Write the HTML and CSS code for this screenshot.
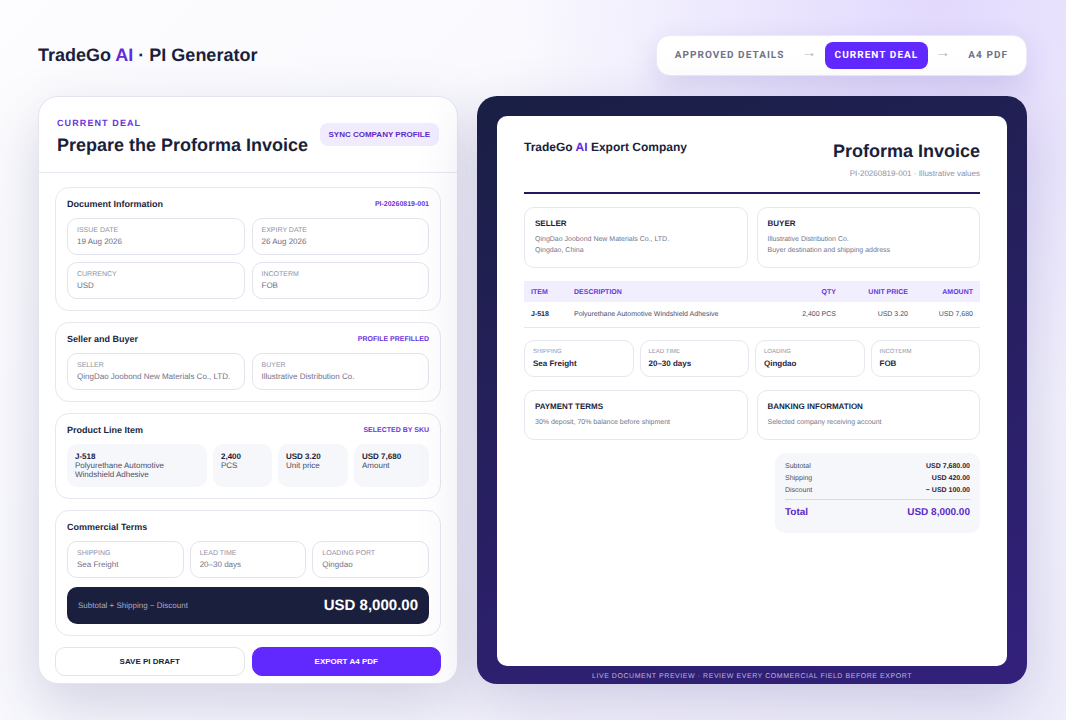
FILE: index.html
```html
<!DOCTYPE html>
<html lang="en">
<head>
<meta charset="UTF-8">
<title>TradeGo AI PI Generator</title>
<link rel="stylesheet" href="styles.css">
</head>
<body>
<header class="topbar">
  <h1 class="brand">TradeGo <span class="accent">AI</span> · PI Generator</h1>
  <div class="steps">
    <span class="step">APPROVED DETAILS</span>
    <span class="arrow">→</span>
    <span class="step step-active">CURRENT DEAL</span>
    <span class="arrow">→</span>
    <span class="step">A4 PDF</span>
  </div>
</header>

<main class="workspace">
  <section class="editor">
    <div class="editor-head">
      <div class="editor-heading">
        <div class="eyebrow">CURRENT DEAL</div>
        <h2 class="editor-title">Prepare the Proforma Invoice</h2>
      </div>
      <button class="sync-btn">SYNC COMPANY PROFILE</button>
    </div>
    <div class="editor-body">
      <div class="group">
        <div class="group-head"><h3>Document Information</h3><span class="tag">PI-20260819-001</span></div>
        <div class="fields fields-2">
          <div class="field"><label>ISSUE DATE</label><div>19 Aug 2026</div></div>
          <div class="field"><label>EXPIRY DATE</label><div>26 Aug 2026</div></div>
          <div class="field"><label>CURRENCY</label><div>USD</div></div>
          <div class="field"><label>INCOTERM</label><div>FOB</div></div>
        </div>
      </div>
      <div class="group">
        <div class="group-head"><h3>Seller and Buyer</h3><span class="tag">PROFILE PREFILLED</span></div>
        <div class="fields fields-2">
          <div class="field"><label>SELLER</label><div>QingDao Joobond New Materials Co., LTD.</div></div>
          <div class="field"><label>BUYER</label><div>Illustrative Distribution Co.</div></div>
        </div>
      </div>
      <div class="group">
        <div class="group-head"><h3>Product Line Item</h3><span class="tag">SELECTED BY SKU</span></div>
        <div class="line-item">
          <div class="cell cell-wide"><b>J-518</b>Polyurethane Automotive Windshield Adhesive</div>
          <div class="cell cell-qty"><b>2,400</b>PCS</div>
          <div class="cell cell-price"><b>USD 3.20</b>Unit price</div>
          <div class="cell cell-amount"><b>USD 7,680</b>Amount</div>
        </div>
      </div>
      <div class="group">
        <div class="group-head"><h3>Commercial Terms</h3></div>
        <div class="fields fields-3">
          <div class="field"><label>SHIPPING</label><div>Sea Freight</div></div>
          <div class="field"><label>LEAD TIME</label><div>20–30 days</div></div>
          <div class="field"><label>LOADING PORT</label><div>Qingdao</div></div>
        </div>
        <div class="total-bar">
          <span>Subtotal + Shipping − Discount</span>
          <strong>USD 8,000.00</strong>
        </div>
      </div>
      <div class="actions">
        <button class="btn">SAVE PI DRAFT</button>
        <button class="btn btn-primary">EXPORT A4 PDF</button>
      </div>
    </div>
  </section>

  <section class="preview">
    <div class="sheet">
      <div class="sheet-head">
        <div class="sheet-company">TradeGo <span class="accent">AI</span> Export Company</div>
        <div class="sheet-heading">
          <h2>Proforma Invoice</h2>
          <p>PI-20260819-001 · Illustrative values</p>
        </div>
      </div>
      <div class="party-row">
        <div class="box"><h4>SELLER</h4><p>QingDao Joobond New Materials Co., LTD.<br>Qingdao, China</p></div>
        <div class="box"><h4>BUYER</h4><p>Illustrative Distribution Co.<br>Buyer destination and shipping address</p></div>
      </div>
      <table class="items">
        <thead>
          <tr><th>ITEM</th><th>DESCRIPTION</th><th class="num">QTY</th><th class="num">UNIT PRICE</th><th class="num">AMOUNT</th></tr>
        </thead>
        <tbody>
          <tr><td class="sku">J-518</td><td>Polyurethane Automotive Windshield Adhesive</td><td class="num">2,400 PCS</td><td class="num">USD 3.20</td><td class="num">USD 7,680</td></tr>
        </tbody>
      </table>
      <div class="meta-row">
        <div class="meta"><label>SHIPPING</label><b>Sea Freight</b></div>
        <div class="meta"><label>LEAD TIME</label><b>20–30 days</b></div>
        <div class="meta"><label>LOADING</label><b>Qingdao</b></div>
        <div class="meta"><label>INCOTERM</label><b>FOB</b></div>
      </div>
      <div class="terms-row">
        <div class="box"><h4>PAYMENT TERMS</h4><p>30% deposit, 70% balance before shipment</p></div>
        <div class="box"><h4>BANKING INFORMATION</h4><p>Selected company receiving account</p></div>
      </div>
      <div class="summary">
        <div class="sum-line"><span>Subtotal</span><b>USD 7,680.00</b></div>
        <div class="sum-line"><span>Shipping</span><b>USD 420.00</b></div>
        <div class="sum-line"><span>Discount</span><b>− USD 100.00</b></div>
        <div class="sum-total"><span>Total</span><span>USD 8,000.00</span></div>
      </div>
    </div>
    <div class="preview-note">LIVE DOCUMENT PREVIEW · REVIEW EVERY COMMERCIAL FIELD BEFORE EXPORT</div>
  </section>
</main>
</body>
</html>
```

FILE: styles.css
```css
* {
  box-sizing: border-box;
}
html, body {
  height: 720px;
  overflow: hidden;
}
body {
  margin: 0;
  padding: 35px 39px 0 38px;
  font-family: "Liberation Sans", Arial, sans-serif;
  text-rendering: geometricPrecision;
  color: #1a1f3d;
  background:
    radial-gradient(circle at 88% 0%, #e2d9fd 0, rgba(226, 217, 253, 0) 36%),
    linear-gradient(135deg, #fdfdff 0%, #f7f7fd 55%, #efeefb 100%);
}
h1, h2, h3, h4, p {
  margin: 0;
}
.accent {
  color: #5f2ce0;
}
.topbar {
  display: flex;
  justify-content: space-between;
  align-items: center;
  height: 41px;
  margin-bottom: 20px;
}
.brand {
  font-size: 18px;
  font-weight: bold;
}
.steps {
  display: flex;
  align-items: center;
  gap: 7px;
  height: 41px;
  padding: 0 8px;
  background: #fff;
  border: 1px solid #eceaf6;
  border-radius: 14px;
  box-shadow: 0 10px 30px rgba(70, 50, 160, 0.14);
  font-family: Roboto, "Liberation Sans", sans-serif;
  font-size: 10px;
  font-weight: bold;
  letter-spacing: 1.05px;
  color: #6f7288;
}
.step {
  padding: 0 10px;
  line-height: 27px;
}
.step-active {
  background: #6229ff;
  color: #fff;
  border-radius: 8px;
}
.arrow {
  width: 16px;
  margin-bottom: 6px;
  font-family: "Liberation Sans", sans-serif;
  font-size: 15px;
  line-height: 27px;
  font-weight: normal;
  letter-spacing: 0;
  color: #b3b5c4;
}
.workspace {
  display: grid;
  grid-template-columns: 420px 550px;
  column-gap: 19px;
  height: 588px;
}
.editor {
  background: #fff;
  border: 1px solid #e3e4ee;
  border-radius: 20px;
  overflow: hidden;
  box-shadow: 0 20px 60px rgba(50, 50, 120, 0.2);
}
.editor-head {
  display: flex;
  justify-content: space-between;
  align-items: center;
  height: 76px;
  padding: 0 18px;
  border-bottom: 1px solid #e8e9f0;
}
.editor-heading {
  margin-top: 5px;
}
.eyebrow {
  font-size: 9px;
  font-weight: bold;
  letter-spacing: 1.1px;
  color: #6a34dd;
  margin-bottom: 7px;
}
.editor-title {
  font-size: 18px;
  line-height: 21px;
  font-weight: bold;
}
.sync-btn {
  border: none;
  height: 23px;
  padding: 0 9px;
  border-radius: 8px;
  background: #f0ebfd;
  color: #5a2bc8;
  font-family: inherit;
  font-size: 8px;
  font-weight: bold;
  white-space: nowrap;
}
.editor-body {
  display: flex;
  flex-direction: column;
  gap: 11px;
  padding: 14px 16px 0;
}
.group {
  border: 1px solid #e6e7ef;
  border-radius: 14px;
  padding: 11px;
}
.group-head {
  display: flex;
  justify-content: space-between;
  align-items: center;
  height: 10px;
  margin-bottom: 9px;
}
.group-head h3 {
  font-size: 9px;
  font-weight: bold;
}
.tag {
  font-size: 7px;
  font-weight: bold;
  color: #6a34dd;
}
.fields {
  display: grid;
  gap: 7px;
}
.fields-2 {
  grid-template-columns: 1fr 1fr;
}
.fields-3 {
  grid-template-columns: 1fr 1fr 1fr;
  gap: 6px;
}
.field {
  height: 37px;
  padding: 7px 9px;
  border: 1px solid #e2e3ec;
  border-radius: 10px;
  font-size: 8px;
  line-height: 11px;
  color: #6f7288;
}
.field label {
  display: block;
  font-size: 7px;
  line-height: 9px;
  margin-bottom: 1px;
  color: #8f91a6;
}
.line-item {
  display: grid;
  grid-template-columns: 140px 59px 70px 75px;
  gap: 6px;
}
.cell {
  background: #f6f7fa;
  border-radius: 10px;
  padding: 8px;
  height: 43px;
  font-size: 8px;
  line-height: 9px;
  color: #4a4e68;
}
.cell b {
  display: block;
  color: #1f2340;
}
.total-bar {
  display: flex;
  justify-content: space-between;
  align-items: center;
  height: 37px;
  margin-top: 9px;
  padding: 0 11px;
  background: #1a1f3d;
  border-radius: 10px;
  color: #a9adc2;
  font-size: 8px;
}
.total-bar strong {
  font-size: 15px;
  color: #fff;
}
.actions {
  display: grid;
  grid-template-columns: 1fr 1fr;
  gap: 7px;
}
.btn {
  height: 29px;
  border: 1px solid #e2e3ec;
  border-radius: 10px;
  background: #fff;
  color: #1a1f3d;
  font-family: inherit;
  font-size: 8px;
  font-weight: bold;
}
.btn-primary {
  background: #6229ff;
  border-color: #6229ff;
  color: #fff;
}
.preview {
  background: linear-gradient(160deg, #1a1f44 0%, #33207c 100%);
  border-radius: 20px;
  padding: 20px 20px 0;
  box-shadow: 0 20px 60px rgba(50, 40, 130, 0.2);
}
.sheet {
  height: 550px;
  background: #fff;
  border-radius: 10px;
  padding: 24px 27px;
}
.sheet-head {
  display: flex;
  justify-content: space-between;
  height: 54px;
  border-bottom: 2px solid #281660;
}
.sheet-company {
  font-size: 12px;
  font-weight: bold;
}
.sheet-heading {
  text-align: right;
}
.sheet-heading h2 {
  font-size: 18px;
  line-height: 22px;
  font-weight: bold;
}
.sheet-heading p {
  margin-top: 7px;
  font-size: 8px;
  color: #8f91a6;
}
.party-row, .terms-row {
  display: grid;
  grid-template-columns: 1fr 1fr;
  gap: 9px;
}
.party-row {
  margin-top: 13px;
}
.box {
  border: 1px solid #e6e7ef;
  border-radius: 10px;
  padding: 11px 10px;
}
.box h4 {
  font-size: 8px;
  font-weight: bold;
  margin-bottom: 6px;
}
.box p {
  font-size: 7px;
  line-height: 11px;
  color: #74768c;
}
.party-row .box {
  height: 61px;
}
.items {
  width: 100%;
  margin-top: 13px;
  border-collapse: collapse;
  font-size: 7px;
}
.items th {
  height: 21px;
  padding: 1px 7px 0;
  background: #f1eefd;
  color: #6a34dd;
  text-align: left;
  font-size: 7px;
  font-weight: bold;
}
.items td {
  height: 25px;
  padding: 1px 7px 0;
  border-bottom: 1px solid #e6e7ef;
  color: #4a4e68;
}
.items .num {
  text-align: right;
}
.items .sku {
  width: 43px;
  font-weight: bold;
  color: #1f2340;
}
.items th:nth-child(3), .items td:nth-child(3) {
  width: 72px;
}
.items th:nth-child(4), .items td:nth-child(4) {
  width: 72px;
}
.items th:nth-child(5), .items td:nth-child(5) {
  width: 65px;
}
.meta-row {
  display: grid;
  grid-template-columns: repeat(4, 1fr);
  gap: 6px;
  margin-top: 12px;
}
.meta {
  height: 37px;
  padding: 8px;
  border: 1px solid #e6e7ef;
  border-radius: 10px;
}
.meta label {
  display: block;
  font-size: 6px;
  line-height: 7px;
  margin-bottom: 3px;
  color: #8f91a6;
}
.meta b {
  display: block;
  font-size: 8px;
  line-height: 10px;
  color: #1f2340;
}
.terms-row {
  margin-top: 13px;
}
.terms-row .box {
  height: 50px;
}
.summary {
  width: 205px;
  height: 80px;
  margin: 13px 0 0 auto;
  padding: 8px 10px;
  background: #f6f7fa;
  border-radius: 10px;
  font-size: 7px;
}
.sum-line {
  display: flex;
  justify-content: space-between;
  line-height: 12px;
  color: #4a4e68;
}
.sum-line b {
  color: #1f2340;
}
.sum-total {
  display: flex;
  justify-content: space-between;
  margin-top: 2px;
  padding-top: 7px;
  border-top: 1px solid #d8d9e2;
  font-size: 10px;
  font-weight: bold;
  color: #5a2bc8;
}
.preview-note {
  padding-top: 7px;
  line-height: 8px;
  text-align: center;
  font-size: 7px;
  letter-spacing: 0.55px;
  color: #b9b6dc;
}
```
